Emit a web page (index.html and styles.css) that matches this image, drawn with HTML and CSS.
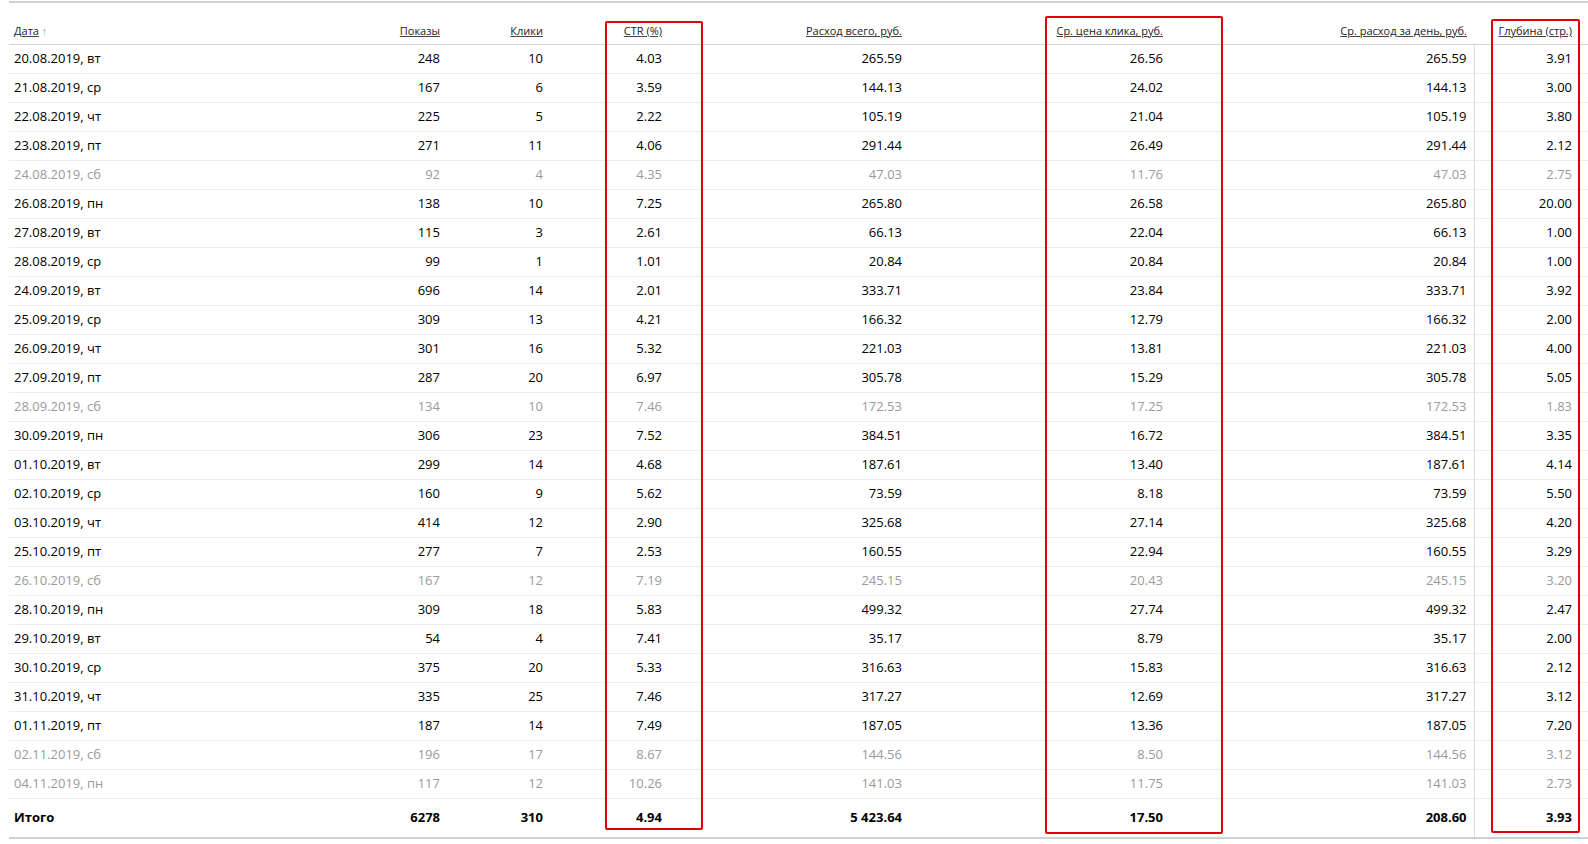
FILE: index.html
```html
<!DOCTYPE html>
<html lang="ru">
<head>
<meta charset="utf-8">
<title>Статистика</title>
<link rel="stylesheet" href="styles.css">
</head>
<body>
<div class="page">
  <div class="wrap">
    <table class="stat">
      <colgroup>
        <col class="c-date"><col class="c-shows"><col class="c-clicks"><col class="c-ctr"><col class="c-cost"><col class="c-cpc"><col class="c-day"><col class="c-depth">
      </colgroup>
      <thead>
        <tr>
          <th class="l"><a class="h">Дата</a> <span class="arrow">↑</span></th>
          <th><a class="h">Показы</a></th>
          <th><a class="h">Клики</a></th>
          <th><a class="h">CTR (%)</a></th>
          <th><a class="h">Расход всего, руб.</a></th>
          <th><a class="h">Ср. цена клика, руб.</a></th>
          <th><a class="h">Ср. расход за день, руб.</a></th>
          <th class="sep"><a class="h">Глубина (стр.)</a></th>
        </tr>
      </thead>
      <tbody>
        <tr><td class="l">20.08.2019, вт</td><td>248</td><td>10</td><td>4.03</td><td>265.59</td><td>26.56</td><td>265.59</td><td class="sep">3.91</td></tr>
        <tr><td class="l">21.08.2019, ср</td><td>167</td><td>6</td><td>3.59</td><td>144.13</td><td>24.02</td><td>144.13</td><td class="sep">3.00</td></tr>
        <tr><td class="l">22.08.2019, чт</td><td>225</td><td>5</td><td>2.22</td><td>105.19</td><td>21.04</td><td>105.19</td><td class="sep">3.80</td></tr>
        <tr><td class="l">23.08.2019, пт</td><td>271</td><td>11</td><td>4.06</td><td>291.44</td><td>26.49</td><td>291.44</td><td class="sep">2.12</td></tr>
        <tr class="off"><td class="l">24.08.2019, сб</td><td>92</td><td>4</td><td>4.35</td><td>47.03</td><td>11.76</td><td>47.03</td><td class="sep">2.75</td></tr>
        <tr><td class="l">26.08.2019, пн</td><td>138</td><td>10</td><td>7.25</td><td>265.80</td><td>26.58</td><td>265.80</td><td class="sep">20.00</td></tr>
        <tr><td class="l">27.08.2019, вт</td><td>115</td><td>3</td><td>2.61</td><td>66.13</td><td>22.04</td><td>66.13</td><td class="sep">1.00</td></tr>
        <tr><td class="l">28.08.2019, ср</td><td>99</td><td>1</td><td>1.01</td><td>20.84</td><td>20.84</td><td>20.84</td><td class="sep">1.00</td></tr>
        <tr><td class="l">24.09.2019, вт</td><td>696</td><td>14</td><td>2.01</td><td>333.71</td><td>23.84</td><td>333.71</td><td class="sep">3.92</td></tr>
        <tr><td class="l">25.09.2019, ср</td><td>309</td><td>13</td><td>4.21</td><td>166.32</td><td>12.79</td><td>166.32</td><td class="sep">2.00</td></tr>
        <tr><td class="l">26.09.2019, чт</td><td>301</td><td>16</td><td>5.32</td><td>221.03</td><td>13.81</td><td>221.03</td><td class="sep">4.00</td></tr>
        <tr><td class="l">27.09.2019, пт</td><td>287</td><td>20</td><td>6.97</td><td>305.78</td><td>15.29</td><td>305.78</td><td class="sep">5.05</td></tr>
        <tr class="off"><td class="l">28.09.2019, сб</td><td>134</td><td>10</td><td>7.46</td><td>172.53</td><td>17.25</td><td>172.53</td><td class="sep">1.83</td></tr>
        <tr><td class="l">30.09.2019, пн</td><td>306</td><td>23</td><td>7.52</td><td>384.51</td><td>16.72</td><td>384.51</td><td class="sep">3.35</td></tr>
        <tr><td class="l">01.10.2019, вт</td><td>299</td><td>14</td><td>4.68</td><td>187.61</td><td>13.40</td><td>187.61</td><td class="sep">4.14</td></tr>
        <tr><td class="l">02.10.2019, ср</td><td>160</td><td>9</td><td>5.62</td><td>73.59</td><td>8.18</td><td>73.59</td><td class="sep">5.50</td></tr>
        <tr><td class="l">03.10.2019, чт</td><td>414</td><td>12</td><td>2.90</td><td>325.68</td><td>27.14</td><td>325.68</td><td class="sep">4.20</td></tr>
        <tr><td class="l">25.10.2019, пт</td><td>277</td><td>7</td><td>2.53</td><td>160.55</td><td>22.94</td><td>160.55</td><td class="sep">3.29</td></tr>
        <tr class="off"><td class="l">26.10.2019, сб</td><td>167</td><td>12</td><td>7.19</td><td>245.15</td><td>20.43</td><td>245.15</td><td class="sep">3.20</td></tr>
        <tr><td class="l">28.10.2019, пн</td><td>309</td><td>18</td><td>5.83</td><td>499.32</td><td>27.74</td><td>499.32</td><td class="sep">2.47</td></tr>
        <tr><td class="l">29.10.2019, вт</td><td>54</td><td>4</td><td>7.41</td><td>35.17</td><td>8.79</td><td>35.17</td><td class="sep">2.00</td></tr>
        <tr><td class="l">30.10.2019, ср</td><td>375</td><td>20</td><td>5.33</td><td>316.63</td><td>15.83</td><td>316.63</td><td class="sep">2.12</td></tr>
        <tr><td class="l">31.10.2019, чт</td><td>335</td><td>25</td><td>7.46</td><td>317.27</td><td>12.69</td><td>317.27</td><td class="sep">3.12</td></tr>
        <tr><td class="l">01.11.2019, пт</td><td>187</td><td>14</td><td>7.49</td><td>187.05</td><td>13.36</td><td>187.05</td><td class="sep">7.20</td></tr>
        <tr class="off"><td class="l">02.11.2019, сб</td><td>196</td><td>17</td><td>8.67</td><td>144.56</td><td>8.50</td><td>144.56</td><td class="sep">3.12</td></tr>
        <tr class="off"><td class="l">04.11.2019, пн</td><td>117</td><td>12</td><td>10.26</td><td>141.03</td><td>11.75</td><td>141.03</td><td class="sep">2.73</td></tr>
      </tbody>
      <tfoot>
        <tr><td class="l">Итого</td><td>6278</td><td>310</td><td>4.94</td><td>5 423.64</td><td>17.50</td><td>208.60</td><td class="sep">3.93</td></tr>
      </tfoot>
    </table>
    <div class="mark mark-ctr"></div>
    <div class="mark mark-cpc"></div>
    <div class="mark mark-depth"></div>
  </div>
</div>
</body>
</html>
```

FILE: styles.css
```css
html, body {
  margin: 0;
  padding: 0;
  background: #fff;
}
.page {
  padding: 1px 0 0 9px;
  font-family: "Open Sans", "Liberation Sans", sans-serif;
  color: #000;
}
.wrap {
  position: relative;
  width: 1579px;
}
.stat {
  width: 1579px;
  border-collapse: collapse;
  table-layout: fixed;
  border-top: 2px solid #cfcfcf;
  border-bottom: 2px solid #cfcfcf;
}
.c-date { width: 321px; }
.c-shows { width: 117px; }
.c-clicks { width: 103px; }
.c-ctr { width: 119px; }
.c-cost { width: 240px; }
.c-cpc { width: 261px; }
.c-day { width: 304px; }
.c-depth { width: 114px; }

.stat th {
  height: 35px;
  padding: 0 7px 6px 0;
  vertical-align: bottom;
  text-align: right;
  font-weight: normal;
  font-size: 11px;
  line-height: 15px;
  white-space: nowrap;
  border-bottom: 1px solid #d4d4d4;
}
.stat th.l { text-align: left; padding-left: 5px; }
.h {
  color: #222;
  text-decoration: underline;
  text-decoration-color: #444;
}
.arrow {
  color: #a0a0a0;
  font-size: 11px;
}
.stat td {
  height: 26px;
  padding: 0 7px 2px 0;
  text-align: right;
  font-size: 13px;
  line-height: 26px;
  white-space: nowrap;
  border-bottom: 1px solid #ececec;
}
.stat td.l { text-align: left; padding-left: 5px; }
.stat .sep { border-left: 1px solid #dcdcdc; padding-right: 16px; }
.stat th.sep { border-left: none; }
.stat tr.off td { color: #9a9a9a; }
.stat tfoot td {
  height: 36px;
  padding-bottom: 2px;
  font-weight: bold;
  border-bottom: none;
}

.mark {
  position: absolute;
  box-sizing: border-box;
  border: 2px solid #e0000b;
  border-radius: 2px;
}
.mark-ctr { left: 596px; top: 20px; width: 98px; height: 809px; }
.mark-cpc { left: 1036px; top: 15px; width: 178px; height: 818px; }
.mark-depth { left: 1482px; top: 18px; width: 89px; height: 814px; }
```
